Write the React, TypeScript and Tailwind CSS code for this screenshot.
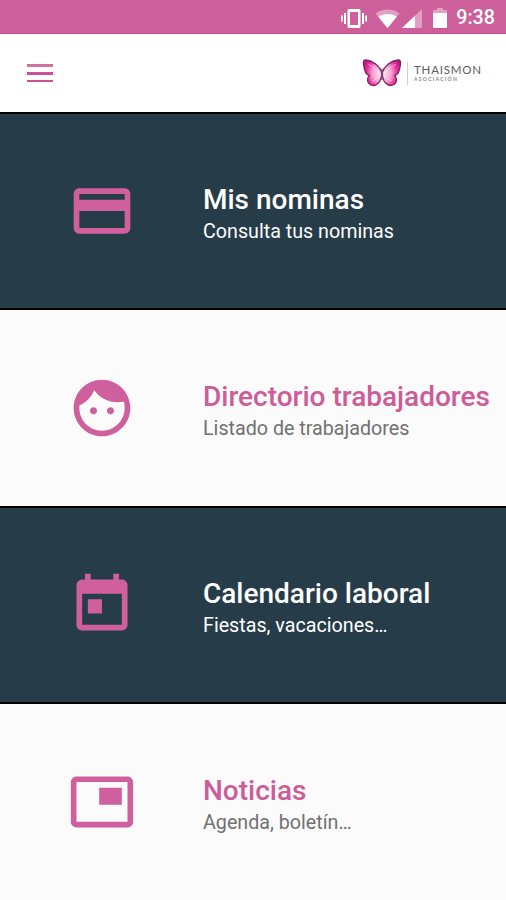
import React from 'react';
import clsx from 'clsx';

const items = [
  {
    title: 'Mis nominas',
    subtitle: 'Consulta tus nominas',
    height: 'h-[196px] border-b-2',
    dark: true,
    icon: 'M20 4H4c-1.11 0-1.99.89-1.99 2L2 18c0 1.11.89 2 2 2h16c1.11 0 2-.89 2-2V6c0-1.11-.89-2-2-2zm0 14H4v-6h16v6zm0-10H4V6h16v2z',
  },
  {
    title: 'Directorio trabajadores',
    subtitle: 'Listado de trabajadores',
    height: 'h-[198px] border-b-2',
    dark: false,
    icon: 'M9 11.75c-.69 0-1.25.56-1.25 1.25s.56 1.25 1.25 1.25 1.25-.56 1.25-1.25-.56-1.25-1.25-1.25zm6 0c-.69 0-1.25.56-1.25 1.25s.56 1.25 1.25 1.25 1.25-.56 1.25-1.25-.56-1.25-1.25-1.25zM12 2C6.48 2 2 6.48 2 12s4.48 10 10 10 10-4.48 10-10S17.52 2 12 2zm0 18c-4.41 0-8-3.59-8-8 0-.29.02-.58.05-.86 2.36-1.05 4.23-2.98 5.21-5.37C11.07 8.33 14.05 10 17.42 10c.78 0 1.53-.09 2.25-.26.21.71.33 1.47.33 2.26 0 4.41-3.59 8-8 8z',
  },
  {
    title: 'Calendario laboral',
    subtitle: 'Fiestas, vacaciones…',
    height: 'h-[196px] border-b-2',
    dark: true,
    icon: 'M19 3h-1V1h-2v2H8V1H6v2H5c-1.11 0-1.99.9-1.99 2L3 19c0 1.1.89 2 2 2h14c1.1 0 2-.9 2-2V5c0-1.1-.9-2-2-2zm0 16H5V8h14v11zM7 10h5v5H7z',
  },
  {
    title: 'Noticias',
    subtitle: 'Agenda, boletín…',
    height: 'h-[196px]',
    dark: false,
    icon: 'M19 7h-8v6h8V7zm2-4H3c-1.1 0-2 .9-2 2v14c0 1.1.9 1.98 2 1.98h18c1.1 0 2-.88 2-1.98V5c0-1.1-.9-2-2-2zm0 16.01H3V4.98h18v14.03z',
  },
];

const StatusBar: React.FC = () => (
  <div className="h-[34px] bg-[#cd5f9b] border-b border-[#c04c8b] flex items-center justify-end pr-[11px] pt-[3px] text-white">
    <svg className="w-[26px] h-[21px] mr-[8px]" viewBox="0 0 26 21" fill="currentColor">
      <path d="M0 7.500h1.800v6H0zM3 5h2v11H3zM21 5h2v11h-2zM24.200 7.500H26v6h-1.800z" />
      <path fillRule="evenodd" d="M8 1h10a1.500 1.500 0 0 1 1.500 1.500v16A1.500 1.500 0 0 1 18 20H8a1.500 1.500 0 0 1-1.500-1.500v-16A1.500 1.500 0 0 1 8 1zM9 4v13h8V4z" />
    </svg>
    <svg className="w-[25px] h-[19px] mr-[2px]" viewBox="0 0 25 19" fill="currentColor">
      <path opacity=".4" d="M12.500 19 .5 4.500C3.800 1.800 8 .5 12.500.5s8.700 1.300 12 4z" />
      <path d="M12.500 19 3.200 7.800C5.800 6 9 5 12.500 5s6.700 1 9.300 2.800z" />
    </svg>
    <svg className="w-[20px] h-[19px] mr-[11px]" viewBox="0 0 20 19" fill="currentColor">
      <path opacity=".4" d="M0 19 20 0v19z" />
      <path d="M0 19 13 6.700V19z" />
    </svg>
    <svg className="w-[14px] h-[20px] mr-[9px]" viewBox="0 0 14 20" fill="currentColor">
      <path opacity=".4" d="M4 0h6v2h4v3H0V2h4z" />
      <path d="M0 5h14v14a1 1 0 0 1-1 1H1a1 1 0 0 1-1-1z" />
    </svg>
    <span className="text-[19.7px] leading-none font-medium">9:38</span>
  </div>
);

const Butterfly: React.FC = () => (
  <svg className="w-[40px] h-[30px]" viewBox="0 0 40 30">
    <defs>
      <radialGradient id="wing" gradientUnits="userSpaceOnUse" cx="20" cy="15" r="21">
        <stop offset="0.1" stopColor="#fdddee" />
        <stop offset="0.45" stopColor="#f6a3d2" />
        <stop offset="0.72" stopColor="#e8309f" />
        <stop offset="1" stopColor="#b3147c" />
      </radialGradient>
    </defs>
    <g fill="url(#wing)" stroke="#7d2462" strokeWidth="1.300" strokeLinejoin="round">
      <path d="M19.500 14C17.500 8 11 2.500 4 2 1.800 2 1 3.500 1.500 6c.8 5 1.500 10.500 6 11.500-3 2.500-2.500 7 .5 9 5 3 10.500-1.500 11.500-8z" />
      <path d="M20.500 14C22.500 8 29 2.500 36 2c2.200 0 3 1.500 2.500 4-.8 5-1.500 10.500-6 11.500 3 2.500 2.500 7-.5 9-5 3-10.500-1.500-11.500-8z" />
    </g>
    <path d="M6 6c5 3 9 6 12.500 10M34 6c-5 3-9 6-12.500 10M10 23c3-1 6-3 8.500-6M30 23c-3-1-6-3-8.500-6" fill="none" stroke="#fff" strokeWidth="1" opacity=".45" />
    <path d="M20 13v9M20 13l-2-3M20 13l2-3" fill="none" stroke="#76556d" strokeWidth="1.200" />
  </svg>
);

const Header: React.FC = () => (
  <header className="h-[80px] bg-white border-b-2 border-black flex items-center justify-between pl-[27px] pr-[24px]">
    <button className="flex flex-col gap-[5px]" aria-label="Menú">
      <span className="block w-[26px] h-[3px] bg-[#cd719f]"></span>
      <span className="block w-[26px] h-[2.500px] bg-[#cd5098]"></span>
      <span className="block w-[26px] h-[2.500px] bg-[#cd5098]"></span>
    </button>
    <div className="flex items-center">
      <Butterfly />
      <div className="w-px h-[23px] bg-[#cfcfcf] ml-[5px] mr-[6px]"></div>
      <div className="w-[68px] font-['Lato',sans-serif] text-[#5c5c5c] whitespace-nowrap">
        <div className="text-[11.500px] leading-[11px] tracking-[0.8px]">THAISMON</div>
        <div className="text-[5px] leading-[8px] tracking-[1.300px] font-bold text-[#888]">ASOCIACIÓN</div>
      </div>
    </div>
  </header>
);

const App: React.FC = () => {
  return (
    <div className="w-full h-[900px] overflow-hidden font-['Roboto',sans-serif]">
      <StatusBar />
      <Header />
      <main>
        {items.map((item) => (
          <div
            key={item.title}
            className={clsx('flex items-center border-black pl-[68px]', item.height, item.dark ? 'bg-[#263c49]' : 'bg-[#fbfbfb]')}
          >
            <svg className="w-[68px] h-[68px] shrink-0 mr-[67px]" viewBox="0 0 24 24" fill="#d0609d">
              <path d={item.icon} />
            </svg>
            <div className="whitespace-nowrap pt-[7px]">
              <h2 className={clsx('text-[28px] leading-[33px] font-medium', item.dark ? 'text-white' : 'text-[#cd5c99]')}>{item.title}</h2>
              <p className={clsx('text-[19.7px] leading-[31px]', item.dark ? 'text-white' : 'text-[#717171]')}>{item.subtitle}</p>
            </div>
          </div>
        ))}
      </main>
    </div>
  );
};

export default App;
